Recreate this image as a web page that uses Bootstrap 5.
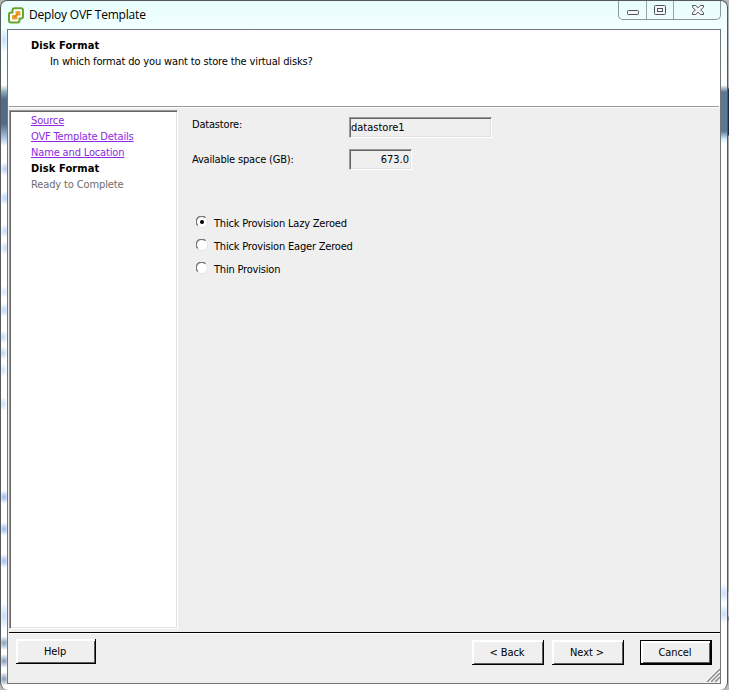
<!DOCTYPE html>
<html lang="en">
<head>
<meta charset="utf-8">
<title>Deploy OVF Template</title>
<link href="https://cdn.jsdelivr.net/npm/bootstrap@5.3.0/dist/css/bootstrap.min.css" rel="stylesheet">
<style>
html,body{height:690px;overflow:hidden}
body{font-family:"DejaVu Sans Condensed","DejaVu Sans",sans-serif;font-stretch:condensed;font-size:11px;line-height:16px;letter-spacing:-.19px;color:#000;background:linear-gradient(#b5b5b5 0 87px,#152b40 90px 135px,#aaa 136px 590px,#ccc 593px 616px,#888 617px 620px,#bbb 622px)}
.dialog-frame{width:728px;height:690px;border:1px solid #55595b;border-top-width:1px;border-bottom:0;border-radius:7px 7px 8px 8px;padding:0 6px 0 6px;background:#fcffff;overflow:hidden;
 background-image:
 radial-gradient(ellipse 5px 12px at 3px 39px,#c5dfff,transparent),
 linear-gradient(#0000 84px,#8ab 91px,#4f6b8c 98px 123px,#b4cbe8 138px,#0000 145px),
 radial-gradient(ellipse 6px 7px at 4px 168px,#b8cef7,transparent),radial-gradient(ellipse 6px 7px at 4px 197px,#b9d5ff,transparent),
 radial-gradient(ellipse 6px 7px at 4px 230px,#c5dcfb,transparent),radial-gradient(ellipse 6px 7px at 4px 247px,#c5dcfb,transparent),
 radial-gradient(ellipse 5px 6px at 3px 291px,#d2e8ff,transparent),radial-gradient(ellipse 6px 7px at 3px 309px,#bfd7fa,transparent),
 radial-gradient(ellipse 5px 7px at 2px 336px,#c2dcfa,transparent),radial-gradient(ellipse 5px 7px at 2px 352px,#bdd7f5,transparent),
 radial-gradient(ellipse 5px 7px at 2px 369px,#cde6fa,transparent),radial-gradient(ellipse 5px 7px at 2px 403px,#c5e1fc,transparent),
 radial-gradient(ellipse 6px 7px at 3px 496px,#9bbaf2,transparent),radial-gradient(ellipse 6px 7px at 3px 528px,#9bbcf0,transparent),
 radial-gradient(ellipse 6px 7px at 3px 560px,#a0bff3,transparent),radial-gradient(ellipse 6px 14px at 3px 615px,#c6dbfb,transparent),
 radial-gradient(ellipse 6px 7px at 3px 642px,#7f9cba,transparent),radial-gradient(ellipse 6px 7px at 3px 660px,#8196bd,transparent),radial-gradient(ellipse 6px 7px at 3px 678px,#8298b8,transparent),
 linear-gradient(#0000 84px,#5d7794 91px 130px,#d6edff 138px,#0000 143px),
 radial-gradient(ellipse 6px 10px at 3px 592px,#c9ddfb,transparent),radial-gradient(ellipse 6px 10px at 3px 613px,#c5dcfb,transparent),
 linear-gradient(#e9fdfd,#f2ffff 29px,#fff 80px);
 background-size:6px 690px,6px 690px,7px 690px,7px 690px,7px 690px,7px 690px,7px 690px,7px 690px,7px 690px,7px 690px,7px 690px,7px 690px,7px 690px,7px 690px,7px 690px,7px 690px,7px 690px,7px 690px,7px 690px,6px 690px,6px 690px,6px 690px,100% 100%;
 background-position:0 0,0 0,0 0,0 0,0 0,0 0,0 0,0 0,0 0,0 0,0 0,0 0,0 0,0 0,0 0,0 0,0 0,0 0,0 0,100% 0,100% 0,100% 0,0 0;background-repeat:no-repeat}
.title-strip{height:28px}
.app-logo{margin:6px 0 0 1px}
.caption-text{font:12px/16px "Open Sans",sans-serif;letter-spacing:-.2px;margin:6px 0 0 5px}
.win-controls{height:19px;width:103px;border:1px solid #8e9899;border-top:0;border-radius:0 0 5px 5px}
.win-controls svg{display:block;margin-top:-1px}
.client-area{height:655px;border:1px solid #707575;background:#efefef;width:714px}
.intro-pane{height:78px;background:#fff;border-bottom:1px solid #fff;position:relative;padding:8px 0 0 23px}
.intro-pane::after{content:"";position:absolute;left:1px;right:1px;bottom:0;height:1px;background:#999}
.intro-pane p{padding-left:19px;letter-spacing:-.14px}
.strong-label{font-family:"DejaVu Sans Condensed",sans-serif;font-weight:700;font-size:11px;letter-spacing:.1px}
.sunken{border:1px solid;border-color:#999 #fff #fff #999;box-shadow:inset 1px 1px #666,inset -1px -1px #e3e3e3}
.steps-pane{width:169px;height:519px;margin:2px 0 0 1px;background:#fff;padding:2px 0 0 21px}
.steps-pane a{color:#8a2be2;text-decoration:underline;text-underline-offset:1px;text-decoration-skip-ink:none;letter-spacing:-.15px}
.steps-pane .pending{color:#6d6d6d;letter-spacing:-.12px}
.main-pane{height:524px}
.settings-pane{padding:9px 0 0 14px}
.field-label{width:157px;padding-bottom:5px}
.field-box{height:21px;padding:1px 2px 0 1px;line-height:18px;letter-spacing:0}
.w-name{width:143px}.w-size{width:63px}
.gap-rows{gap:11px}
.choices{margin:41px 0 0 4px}
.choice-row{height:23px;gap:6px}
.choice-row span{padding-top:2px}
.choice-row svg{display:block;margin-bottom:2px}
.foot-bar{height:51px;margin-left:1px;border-top:1px solid #000;box-shadow:inset 0 1px #fff;position:relative;padding:6px 8px 0 7px}
.push{height:25px;width:72px;border:0;border-radius:0;padding:0 2px 0 0;font:inherit;letter-spacing:-.1px;line-height:25px;color:#000;background:#efefef;box-shadow:inset -1px -1px #000,inset 2px 2px #fff,inset -2px -2px #5d5d5d}
.push.wide{width:80px;height:25px}
.push.default{border:1px solid #000;line-height:24px}
.foot-bar .nav-group{padding-top:1px;gap:8px}
.foot-bar .nav-group .last{margin-left:8px}
.grip{position:absolute;right:0;bottom:1px}
</style>
<script src="https://cdn.jsdelivr.net/npm/bootstrap@5.3.0/dist/js/bootstrap.bundle.min.js"></script>
</head>
<body>
<div class="dialog-frame">
  <header class="title-strip d-flex align-items-start">
    <svg class="app-logo" width="16" height="17" viewBox="0 0 16 17"><path d="M6.500 1.200H13Q15 1.200 15 3.200V9.500Q15 11.500 13 11.500H11.500V13.500Q11.500 15.500 9.500 15.500H3Q1 15.500 1 13.500V7.500Q1 5.500 3 5.500H4.500V3.200Q4.500 1.200 6.500 1.200Z" fill="#fff" stroke="#69a52d" stroke-width="2"/><path d="M7.500 4H12.500V8.500H9.500V12.500H4V8H7.500Z" fill="#e9a63a"/><path d="M6 10.500L10.500 6" stroke="#d9820f" stroke-width="1.500"/></svg>
    <div class="caption-text">Deploy OVF Template</div>
    <div class="win-controls ms-auto"><svg width="101" height="19" viewBox="0 0 101 19"><path d="M27.500 0v19M54.500 0v19" stroke="#98a5a6"/><g fill="#f5f5f7" stroke="#4d5262"><rect x="8.500" y="10.500" width="11" height="4" rx="1"/><rect x="35.500" y="5.500" width="11" height="9" rx="1"/><rect x="38.500" y="8.500" width="5" height="3"/></g><path d="M73.500 5.500h3.200l2.300 2.300 2.300-2.300h3.200v1.800L81.700 10l2.800 2.700v1.800h-3.200L79 12.200l-2.300 2.300h-3.200v-1.800L76.300 10l-2.800-2.700z" fill="#f5f5f7" stroke="#4d5262"/></svg></div>
  </header>
  <main class="client-area">
    <section class="intro-pane">
      <div class="strong-label">Disk Format</div>
      <p class="m-0">In which format do you want to store the virtual disks?</p>
    </section>
    <div class="main-pane d-flex">
      <nav class="steps-pane sunken d-flex flex-column align-items-start">
        <a href="#">Source</a><a href="#">OVF Template Details</a><a href="#">Name and Location</a>
        <span class="strong-label">Disk Format</span><span class="pending">Ready to Complete</span>
      </nav>
      <section class="settings-pane">
        <div class="d-flex flex-column gap-rows">
          <div class="d-flex align-items-center"><div class="field-label">Datastore:</div><div class="field-box sunken w-name">datastore1</div></div>
          <div class="d-flex align-items-center"><div class="field-label pb-0">Available space (GB):</div><div class="field-box sunken w-size text-end">673.0</div></div>
        </div>
        <div class="choices">
          <div class="choice-row d-flex align-items-center"><svg width="12" height="12" viewBox="0 0 12 12"><circle cx="6" cy="6" r="5.500" fill="#fff"/><path d="M1.800 9.500A5.300 5.300 0 0 1 9.500 1.800" fill="none" stroke="#777" stroke-width="1.400"/><path d="M10 2.500A5 5 0 0 1 2.500 10" fill="none" stroke="#e4e4e4"/><circle cx="6" cy="6" r="2"/></svg><span>Thick Provision Lazy Zeroed</span></div>
          <div class="choice-row d-flex align-items-center"><svg width="12" height="12" viewBox="0 0 12 12"><circle cx="6" cy="6" r="5.500" fill="#fff"/><path d="M1.800 9.500A5.300 5.300 0 0 1 9.500 1.800" fill="none" stroke="#777" stroke-width="1.400"/><path d="M10 2.500A5 5 0 0 1 2.500 10" fill="none" stroke="#e4e4e4"/></svg><span>Thick Provision Eager Zeroed</span></div>
          <div class="choice-row d-flex align-items-center"><svg width="12" height="12" viewBox="0 0 12 12"><circle cx="6" cy="6" r="5.500" fill="#fff"/><path d="M1.800 9.500A5.300 5.300 0 0 1 9.500 1.800" fill="none" stroke="#777" stroke-width="1.400"/><path d="M10 2.500A5 5 0 0 1 2.500 10" fill="none" stroke="#e4e4e4"/></svg><span>Thin Provision</span></div>
        </div>
      </section>
    </div>
    <footer class="foot-bar d-flex align-items-start justify-content-between">
      <button class="btn push wide">Help</button>
      <div class="nav-group d-flex"><button class="btn push">&lt; Back</button><button class="btn push">Next &gt;</button><button class="btn push default last">Cancel</button></div>
      <svg class="grip" width="14" height="14" viewBox="0 0 14 14"><path d="M0 14L14 0M4 14L14 4M8 14l6-6" stroke="#fff" stroke-width="2"/><path d="M1 14L14 1M5 14l9-9M9 14l5-5" stroke="#888" stroke-width="1.500"/></svg>
    </footer>
  </main>
</div>
</body>
</html>
